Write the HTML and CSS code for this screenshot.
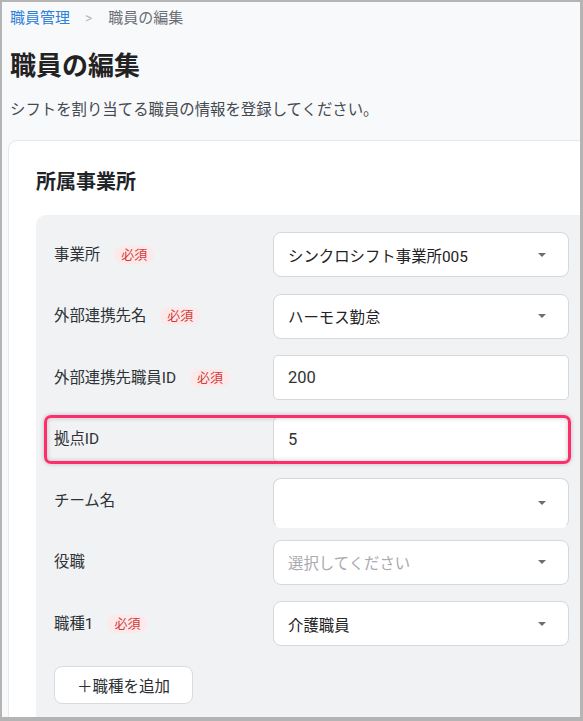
FILE: index.html
```html
<!DOCTYPE html>
<html lang="ja">
<head>
<meta charset="utf-8">
<title>職員の編集</title>
<link rel="stylesheet" href="styles.css">
</head>
<body>
<div class="frame">
  <div class="page">
    <nav class="crumbs">
      <a class="crumb-link" href="#">職員管理</a>
      <span class="crumb-sep">&gt;</span>
      <span class="crumb-current">職員の編集</span>
    </nav>
    <h1 class="title">職員の編集</h1>
    <p class="lead">シフトを割り当てる職員の情報を登録してください。</p>

    <section class="card">
      <h2 class="card-title">所属事業所</h2>
      <div class="panel">
        <div class="rows">
          <div class="row">
            <div class="label">事業所<span class="req">必須</span></div>
            <div class="field select"><span class="value">シンクロシフト事業所005</span><span class="caret"></span></div>
          </div>
          <div class="row">
            <div class="label">外部連携先名<span class="req">必須</span></div>
            <div class="field select"><span class="value">ハーモス勤怠</span><span class="caret"></span></div>
          </div>
          <div class="row">
            <div class="label">外部連携先職員ID<span class="req">必須</span></div>
            <div class="field input"><span class="value">200</span></div>
          </div>
          <div class="row hl">
            <div class="label">拠点ID</div>
            <div class="field input"><span class="value">5</span></div>
          </div>
          <div class="row">
            <div class="label">チーム名</div>
            <div class="field select tall"><span class="value"></span><span class="caret"></span></div>
          </div>
          <div class="row">
            <div class="label">役職</div>
            <div class="field select"><span class="value placeholder">選択してください</span><span class="caret"></span></div>
          </div>
          <div class="row">
            <div class="label">職種1<span class="req">必須</span></div>
            <div class="field select"><span class="value">介護職員</span><span class="caret"></span></div>
          </div>
        </div>
        <button class="add-btn" type="button">＋職種を追加</button>
      </div>
    </section>
  </div>
</div>
</body>
</html>
```

FILE: styles.css
```css
* { box-sizing: border-box; }

html, body {
  margin: 0;
  padding: 0;
  background: #b4b4b4;
}

body {
  font-family: "Roboto", "Noto Sans CJK JP", "Noto Sans", sans-serif;
  color: #222;
}

.frame {
  width: 583px;
  height: 721px;
  border-style: solid;
  border-color: #b4b4b4;
  border-width: 2px 3px 4px 2px;
  background: #f8f9fb;
  overflow: hidden;
}

.page {
  width: 640px;
  padding-top: 5px;
}

.crumbs {
  padding-left: 8px;
  height: 22px;
  line-height: 22px;
  font-size: 15px;
  display: flex;
  align-items: center;
}

.crumb-link {
  color: #2f80d8;
  text-decoration: none;
}

.crumb-sep {
  color: #b8bcc2;
  margin: 0 16px 0 15px;
  font-size: 14px;
}

.crumb-current {
  color: #6b6f75;
}

.title {
  margin: 19px 0 0;
  padding-left: 8px;
  font-size: 26px;
  line-height: 36px;
  font-weight: 700;
  color: #222;
}

.lead {
  margin: 15px 0 0;
  padding-left: 8px;
  font-size: 15.4px;
  line-height: 22px;
  color: #454a50;
}

.card {
  margin: 19px 0 0 6px;
  background: #fff;
  border: 1px solid #e6e8eb;
  border-radius: 9px 0 0 0;
  padding: 27px 0 0 27px;
  height: 700px;
}

.card-title {
  margin: 0;
  font-size: 20px;
  line-height: 28px;
  font-weight: 700;
  color: #1f2429;
}

.panel {
  margin-top: 19px;
  background: #f1f2f4;
  border-radius: 10px 0 0 0;
  padding: 17px 0 40px 18px;
}

.rows {
  display: flex;
  flex-direction: column;
  align-items: flex-start;
  gap: 16.5px;
}

.row {
  display: grid;
  grid-template-columns: 219px 296px;
  grid-template-rows: 45px;
  width: 515px;
  height: 45px;
  align-items: center;
}

.label {
  display: flex;
  align-items: center;
  font-size: 15.4px;
  line-height: 22px;
  color: #2e3236;
}

.req {
  margin-left: 14px;
  display: inline-block;
  height: 18px;
  line-height: 18px;
  padding: 0 7px;
  border-radius: 9px;
  background: #fde9e9;
  color: #d23a3a;
  font-size: 13px;
}

.field {
  position: relative;
  height: 45px;
  background: #fff;
  border: 1px solid #d5d8dd;
  border-radius: 8px;
  display: flex;
  align-items: center;
  padding: 0 14px;
  font-size: 15.4px;
  color: #222;
}

.field.input {
  border-radius: 5px;
}

.field.input .value {
  font-size: 16.5px;
  color: #333;
}

.field.tall {
  height: 50px;
  align-self: start;
  border-bottom-color: transparent;
}

.value {
  flex: 1;
}

.value.placeholder {
  color: #a9abae;
}

.caret {
  width: 0;
  height: 0;
  border-left: 4.5px solid transparent;
  border-right: 4.5px solid transparent;
  border-top: 4.5px solid #6e6e6e;
  margin-right: 8px;
}

.row.hl {
  position: relative;
}

.row.hl::after {
  content: "";
  position: absolute;
  left: -10px;
  top: -2px;
  right: -2px;
  bottom: -2px;
  border: 3px solid #ff2d6b;
  border-radius: 7px;
  box-shadow: 0 0 4px rgba(0, 0, 0, 0.22), inset 0 0 5px rgba(0, 0, 0, 0.2);
  pointer-events: none;
}

.add-btn {
  margin-top: 20px;
  width: 139px;
  height: 38px;
  background: #fff;
  border: 1px solid #d8dbe0;
  border-radius: 8px;
  font-family: inherit;
  font-size: 15.5px;
  color: #2b2f33;
  padding: 0;
  cursor: pointer;
}
```
